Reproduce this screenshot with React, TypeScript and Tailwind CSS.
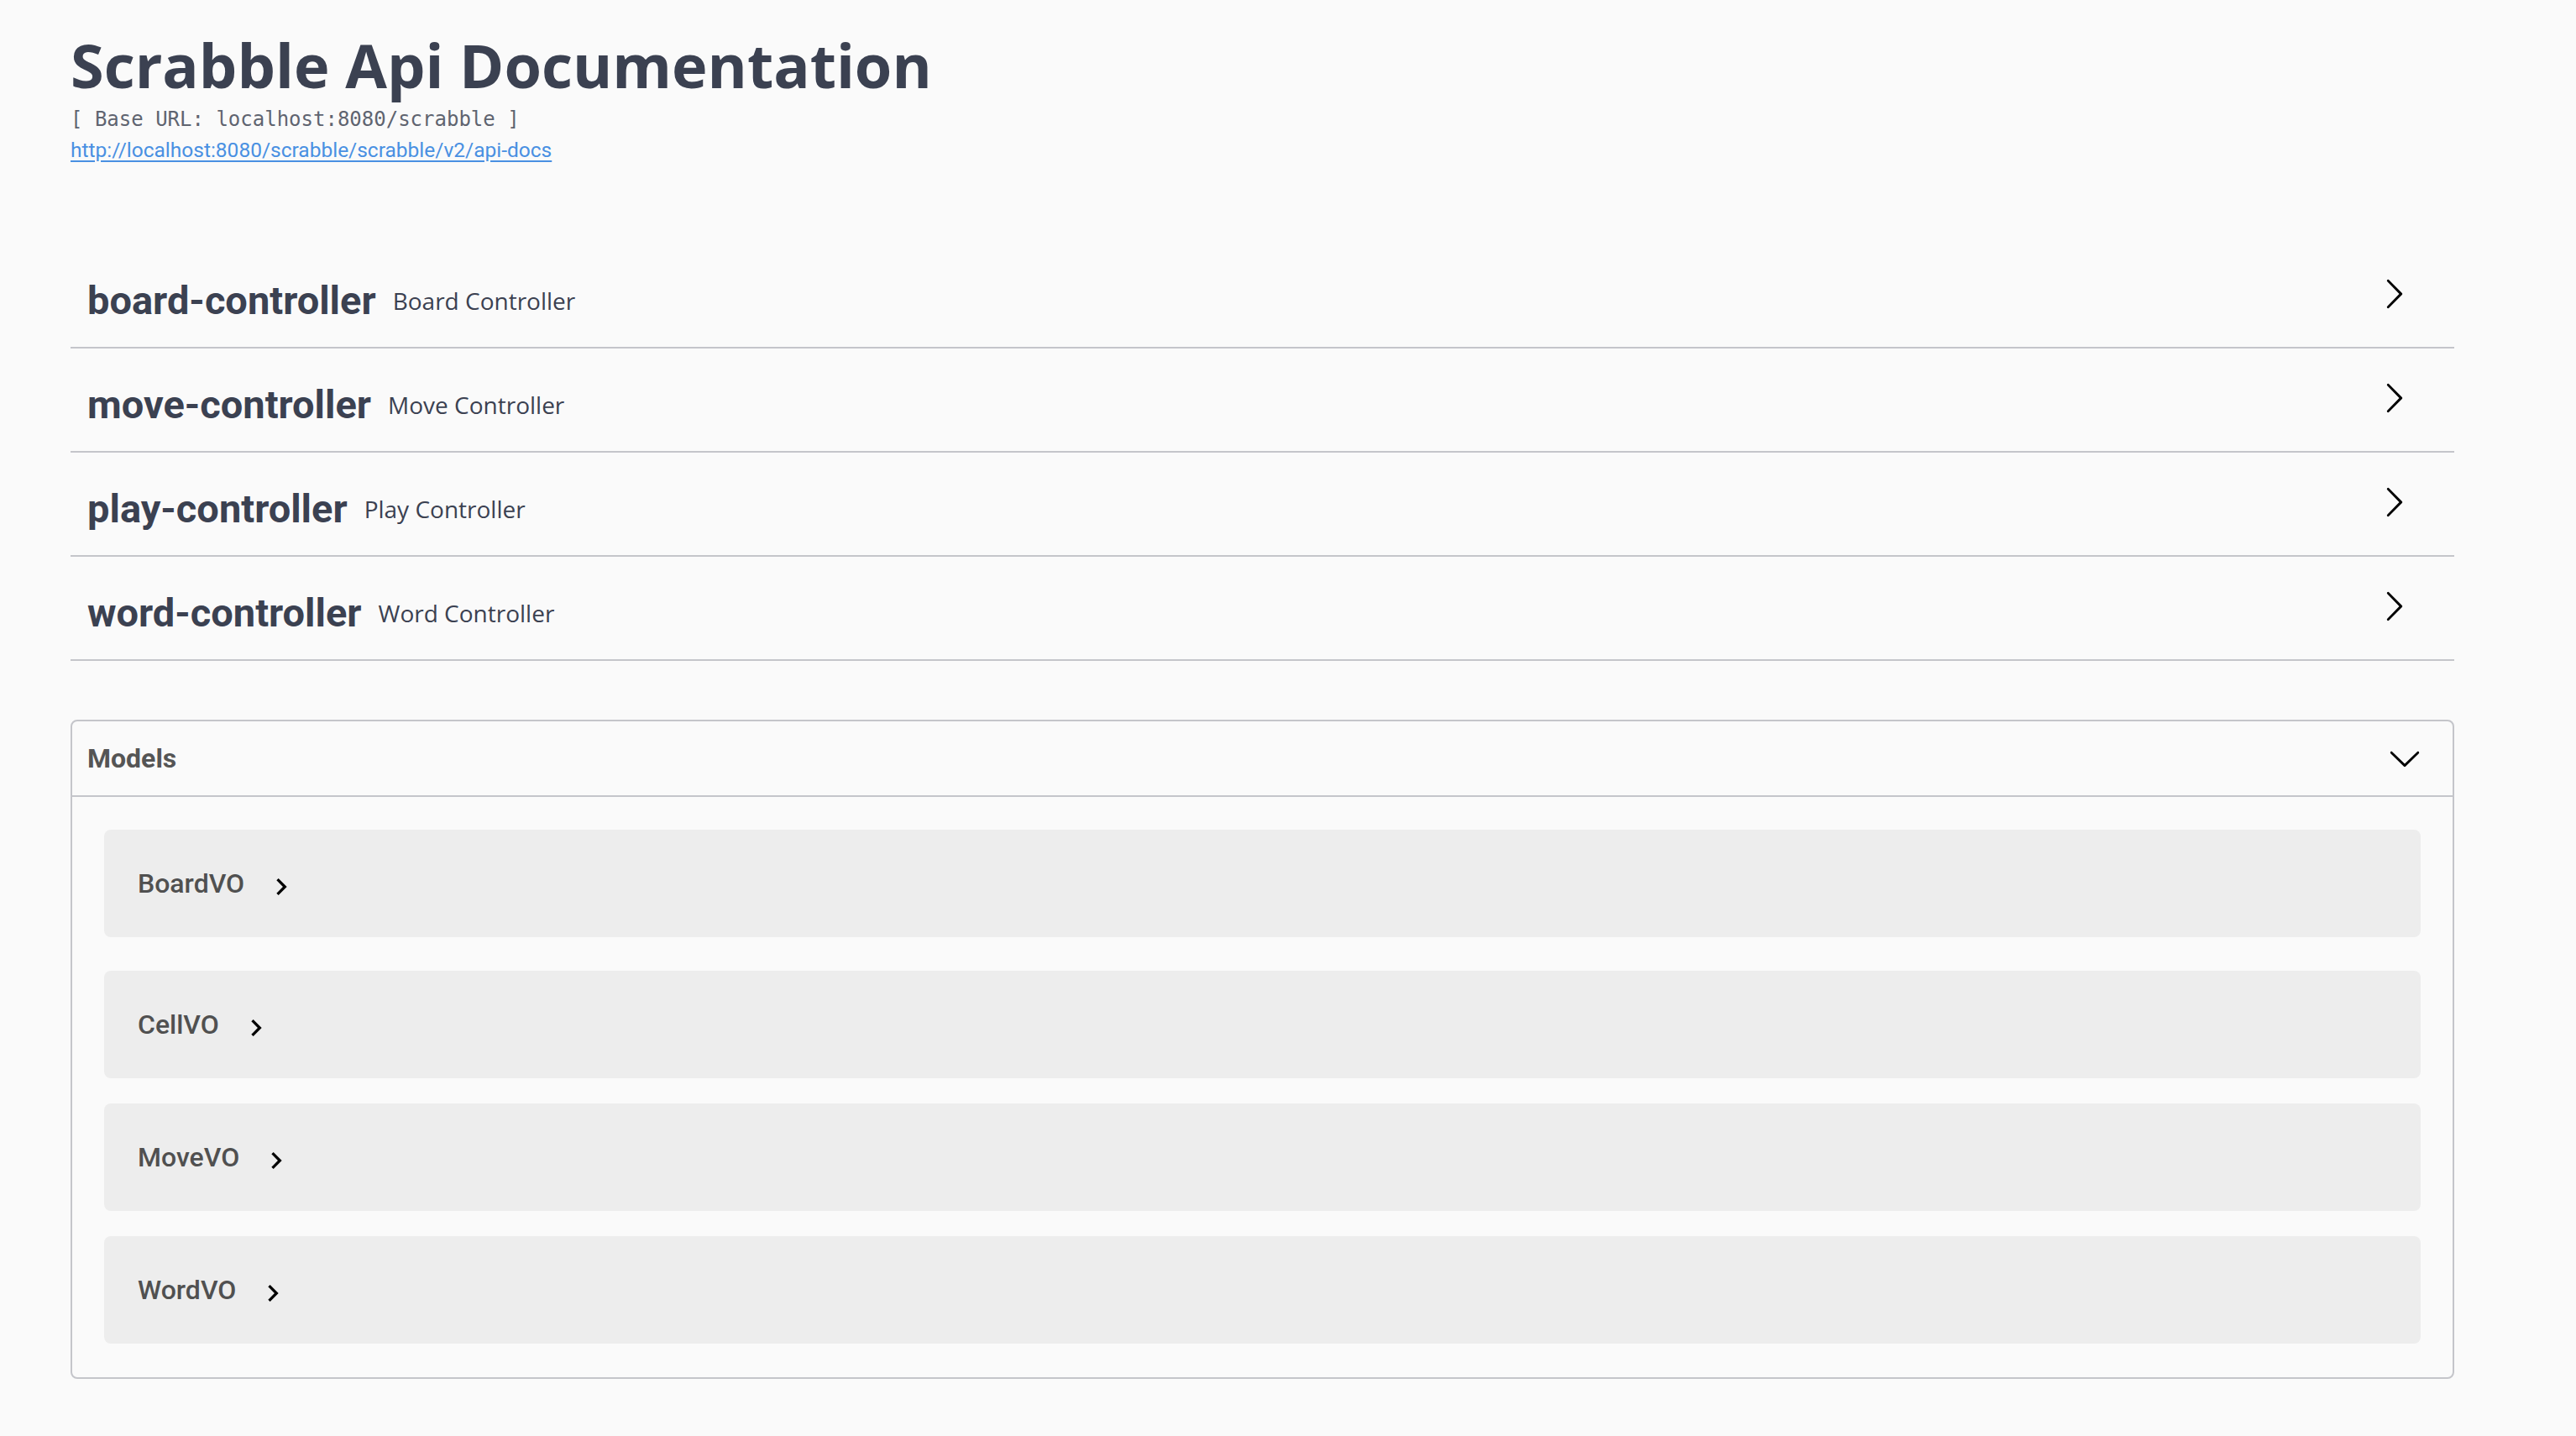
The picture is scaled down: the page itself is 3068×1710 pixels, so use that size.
import { useState } from "react";

type TagType = {
  name: string;
  description: string;
};

const tags: TagType[] = [
  { name: "board-controller", description: "Board Controller" },
  { name: "move-controller", description: "Move Controller" },
  { name: "play-controller", description: "Play Controller" },
  { name: "word-controller", description: "Word Controller" },
];

const models = [
  { name: "BoardVO", gap: "mb-[40px]" },
  { name: "CellVO", gap: "mb-[30px]" },
  { name: "MoveVO", gap: "mb-[30px]" },
  { name: "WordVO", gap: "mb-[40px]" },
];

const LargeArrow = () => (
  <svg width="40" height="40" viewBox="0 0 20 20" className="shrink-0 mb-[14px]">
    <path d="M13.25 10L6.109 2.58a.697.697 0 0 1 0-.979.68.68 0 0 1 .969 0l7.83 7.908a.697.697 0 0 1 0 .979l-7.83 7.908a.68.68 0 0 1-.969 0 .697.697 0 0 1 0-.979L13.25 10z" />
  </svg>
);

const LargeArrowDown = () => (
  <svg width="40" height="40" viewBox="0 0 20 20" className="shrink-0">
    <path d="M17.418 6.109c.272-.268.709-.268.979 0s.271.701 0 .969l-7.908 7.83c-.27.268-.707.268-.979 0l-7.908-7.83c-.27-.268-.27-.701 0-.969.271-.268.709-.268.979 0L10 13.25l7.418-7.141z" />
  </svg>
);

const SmallArrow = () => (
  <svg width="40" height="40" viewBox="0 0 24 24" className="shrink-0 ml-[24px] mt-[8px]">
    <path d="M10 6L8.59 7.41 13.17 12l-4.58 4.59L10 18l6-6z" />
  </svg>
);

const TagRow: React.FC<{ tag: TagType }> = ({ tag }) => (
  <div className="flex items-center h-[114px] mb-[10px] pl-[20px] pr-[52px] border-b-2 border-[#c4c5ca] cursor-pointer">
    <span className="font-['Roboto',sans-serif] text-[47px] font-bold text-[#3b4151] leading-none">
      {tag.name}
    </span>
    <span className="flex-1 px-[20px] pt-[2px] text-[28px] text-[#3b4151] leading-none">
      {tag.description}
    </span>
    <LargeArrow />
  </div>
);

export default function App() {
  const [showModels, setShowModels] = useState<boolean>(true);

  return (
    <div className="min-h-screen bg-[#fafafa] font-['Open_Sans','Noto_Sans',sans-serif]">
      <div className="w-[2839px] ml-[84px]">
        {/* info */}
        <div className="pt-[28px]">
          <h2 className="text-[72px] font-bold text-[#3b4151] leading-[98px]">
            Scrabble Api Documentation
          </h2>
          <pre className="mt-[2px] text-[24px] leading-[28px] text-[#5f6470] font-['DejaVu_Sans_Mono',monospace]">
            [ Base URL: localhost:8080/scrabble ]
          </pre>
          <a
            href="#"
            className="block w-fit mt-[8px] font-['Roboto',sans-serif] text-[24.5px] leading-[30px] text-[#4990e2] underline underline-offset-[4px]"
          >
            http://localhost:8080/scrabble/scrabble/v2/api-docs
          </a>
        </div>

        {/* tags */}
        <div className="mt-[107px]">
          {tags.map((tag) => (
            <TagRow key={tag.name} tag={tag} />
          ))}
        </div>

        {/* models */}
        <section className="mt-[70px] border-2 border-[#c4c5ca] rounded-[8px]">
          <div
            className="flex items-center justify-between h-[90px] pl-[18px] pr-[37px] border-b-2 border-[#c4c5ca] cursor-pointer"
            onClick={() => setShowModels((prev) => !prev)}
          >
            <h4 className="font-['Roboto',sans-serif] text-[32px] font-bold text-[#555555]">
              Models
            </h4>
            <LargeArrowDown />
          </div>

          {showModels && (
            <div className="pt-[39px] px-[38px]">
              {models.map((model) => (
                <div
                  key={model.name}
                  className={`flex items-center h-[128px] pl-[40px] rounded-[8px] bg-[#ededed] ${model.gap}`}
                >
                  <span className="font-['Roboto',sans-serif] text-[32px] font-medium text-[#505050] leading-none">
                    {model.name}
                  </span>
                  <SmallArrow />
                </div>
              ))}
            </div>
          )}
        </section>
      </div>
    </div>
  );
}
